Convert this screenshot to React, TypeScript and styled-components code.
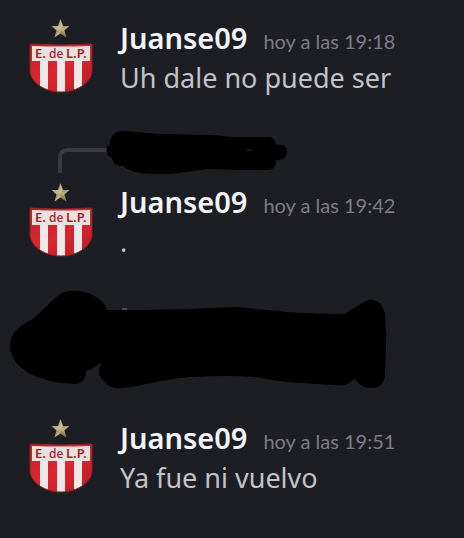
import React from "react";
import styled, { createGlobalStyle } from "styled-components";

const GlobalStyle = createGlobalStyle`
  body {
    margin: 0;
    background: #1d1e23;
    font-family: "Noto Sans", "Open Sans", sans-serif;
  }
`;

const Chat = styled.main`
  display: flex;
  flex-direction: column;
  padding: 18px 0 40px;
`;

const MessageRow = styled.article`
  display: grid;
  grid-template-columns: 64px 1fr;
  column-gap: 27px;
  padding: 0 16px 0 29px;
`;

const Avatar = styled.svg`
  display: block;
  width: 64px;
  height: 76px;
`;

const Header = styled.header`
  display: flex;
  align-items: baseline;
  gap: 16px;
  height: 40px;
  line-height: 40px;
  white-space: nowrap;
`;

const Author = styled.h2`
  margin: 0;
  font-size: 29px;
  font-weight: 600;
  color: #f4f4f6;
`;

const Time = styled.time`
  font-family: Lato, "Noto Sans", sans-serif;
  font-size: 20px;
  color: #7c7c88;
`;

const Body = styled.p`
  margin: 0;
  font-size: 27px;
  line-height: 40px;
  color: #c2c3c8;
`;

const ReplyRow = styled.div`
  display: flex;
  padding: 33px 0 7px 58px;
`;

const Spine = styled.span`
  box-sizing: border-box;
  width: 50px;
  height: 25px;
  margin: 17px -2px 0 0;
  border-top: 4px solid #393a42;
  border-left: 4px solid #393a42;
  border-top-left-radius: 9px;
`;

const HiddenRow = styled.div`
  padding: 27px 0 28px 8px;
`;

const Scribble = styled.svg`
  display: block;
  flex: none;
`;

const CrestText = styled.text<{ $light?: boolean }>`
  font-family: "Noto Sans", sans-serif;
  font-size: ${(p) => (p.$light ? 12 : 13)}px;
  font-weight: ${(p) => (p.$light ? 500 : 600)};
  fill: #9f2329;
`;

function Crest({ id }: { id: string }) {
  return (
    <Avatar viewBox="0 0 64 76" role="img" aria-label="E. de L.P.">
      <defs>
        <clipPath id={`${id}-shield`}>
          <path d="M1 26Q32 28 63 26V53C63 62 51 74 32 74S1 62 1 53Z" />
        </clipPath>
        <linearGradient id={`${id}-red`} x1="0" y1="0" x2="1" y2="1">
          <stop offset="0" stopColor="#bd242d" />
          <stop offset="0.5" stopColor="#dc2630" />
          <stop offset="1" stopColor="#b61c26" />
        </linearGradient>
        <linearGradient id={`${id}-gold`} x1="0" y1="0" x2="1" y2="1">
          <stop offset="0" stopColor="#91805a" />
          <stop offset="0.5" stopColor="#d0c18d" />
          <stop offset="1" stopColor="#77663f" />
        </linearGradient>
      </defs>
      <path
        d="M31.5 1L34 8H40.5L35.4 12.4L37.5 19.5L31.5 15.6L25.5 19.5L27.6 12.4L22.5 8H29Z"
        fill={`url(#${id}-gold)`}
      />
      <path d="M31.5 11L34 8H40.5ZM31.5 11L37.5 19.5L31.5 15.6ZM31.5 11L27.6 12.4L25.5 19.5Z" fill="#685a3b" opacity="0.35" />
      <g clipPath={`url(#${id}-shield)`}>
        <path d="M0 25H64V76H0Z" fill={`url(#${id}-red)`} />
        <path d="M3 28Q32 29 61 28V43H3Z" fill="#e9e0df" />
        <path d="M11 43H19V76H11ZM28 43H36V76H28ZM45 43H53V76H45Z" fill="#eee9e8" />
      </g>
      <path
        d="M1 26Q32 28 63 26V53C63 62 51 74 32 74S1 62 1 53Z"
        fill="none"
        stroke="#8c2025"
        strokeWidth="1"
      />
      <CrestText x="6" y="40">E.</CrestText>
      <CrestText $light x="20" y="40">de</CrestText>
      <CrestText x="37" y="40">L.P.</CrestText>
    </Avatar>
  );
}

interface MessageProps {
  id: string;
  time: string;
  text: string;
}

function Message({ id, time, text }: MessageProps) {
  return (
    <MessageRow>
      <Crest id={id} />
      <div>
        <Header>
          <Author>Juanse09</Author>
          <Time dateTime={time}>hoy a las {time}</Time>
        </Header>
        <Body>{text}</Body>
      </div>
    </MessageRow>
  );
}

export default function App() {
  return (
    <>
      <GlobalStyle />
      <Chat>
        <Message id="first" time="19:18" text="Uh dale no puede ser" />
        <ReplyRow>
          <Spine />
          <Scribble width="182" height="44" viewBox="0 0 182 44" aria-hidden="true">
            <path d="M4 13C4 4 9 0 18 0L54 3L106 4L127 6H163C167 6 169 9 170 14C177 12 181 16 181 21S176 30 170 29C170 36 167 39 161 39H139L100 38C76 42 60 44 46 43C34 43 23 40 17 35C9 35 7 31 6 27C-1 24 -1 17 4 13Z" />
            <path d="M139 19Q143 17 148 19Q143 21 139 19Z" fill="#17181c" />
          </Scribble>
        </ReplyRow>
        <Message id="second" time="19:42" text="." />
        <HiddenRow>
          <Scribble width="380" height="101" viewBox="0 0 380 101" aria-hidden="true">
            <path d="M25 32L35 24" stroke="#777980" strokeWidth="1" />
            <path d="M114 20H119" stroke="#777980" strokeWidth="1" />
            <path d="M2 57C2 45 11 37 23 31C35 23 43 10 56 3C74 -2 96 8 99 21H126L180 20L230 18C265 22 291 25 336 25C346 21 357 9 365 11C375 13 379 24 377 38C379 41 378 49 378 58L377 86C377 93 372 99 363 99C354 99 350 94 346 89C342 95 338 97 329 96C301 95 270 93 248 88Q220 86 182 88C155 90 130 98 113 99C103 101 95 93 91 85Q91 78 93 75L92 74Q85 80 78 82C78 90 74 95 67 95C57 94 46 94 36 90C14 84 2 70 2 57Z" />
          </Scribble>
        </HiddenRow>
        <Message id="third" time="19:51" text="Ya fue ni vuelvo" />
      </Chat>
    </>
  );
}
